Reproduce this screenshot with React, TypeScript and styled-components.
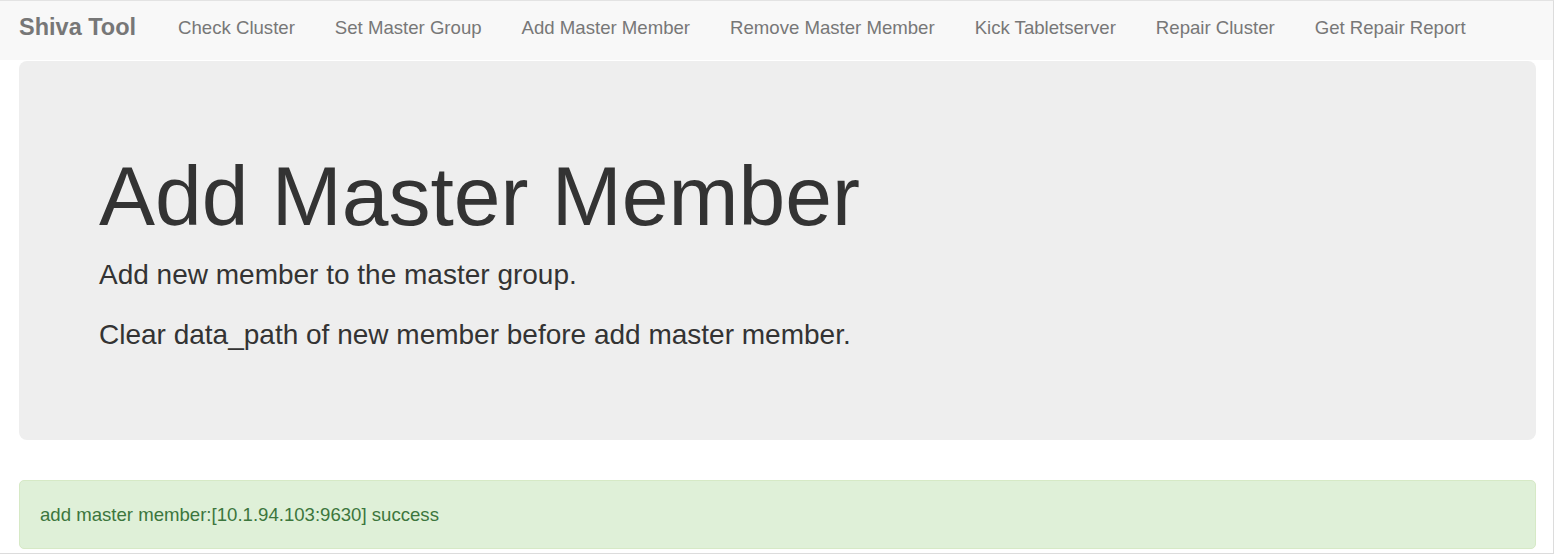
import React from 'react';
import styled, { createGlobalStyle } from 'styled-components';

const GlobalStyle = createGlobalStyle`
  html, body {
    margin: 0;
    padding: 0;
    background: #fff;
  }
  body {
    font-family: "Liberation Sans", Arial, Helvetica, sans-serif;
    color: #333;
  }
  * {
    box-sizing: border-box;
  }
`;

const Page = styled.div`
  width: 1554px;
  height: 554px;
  border-top: 1px solid #e3e3e3;
  border-right: 1px solid #dcdcdc;
  border-bottom: 1px solid #dcdcdc;
  overflow: hidden;
`;

const Navbar = styled.nav`
  height: 59px;
  background: #f8f8f8;
  display: flex;
  align-items: center;
  padding: 0 0 6px 0;
`;

const Brand = styled.a`
  font-size: 23.5px;
  font-weight: bold;
  color: #777;
  text-decoration: none;
  padding: 0 22px 0 19px;
  line-height: 27px;
`;

const NavList = styled.ul`
  display: flex;
  list-style: none;
  margin: 0;
  padding: 0;
`;

const NavItem = styled.li`
  a {
    display: block;
    padding: 0 20px;
    font-size: 18.6px;
    line-height: 27px;
    color: #777;
    text-decoration: none;
  }
`;

const Container = styled.div`
  padding: 1px 17px 0 19px;
`;

const Jumbotron = styled.div`
  background: #eee;
  border-radius: 8px;
  padding: 62px 80px 65px;
`;

const Title = styled.h1`
  margin: 27px 0 13px;
  font-size: 84px;
  font-weight: 500;
  line-height: 1.1;
  color: #333;
`;

const Lead = styled.p`
  margin: 0 0 20px;
  font-size: 28px;
  line-height: 40px;
  font-weight: 200;
`;

const Alert = styled.div<{ $variant: 'success' }>`
  margin-top: 40px;
  padding: 20px;
  border: 1px solid #d6e9c6;
  border-radius: 5px;
  background: #dff0d8;
  color: #3c763d;
  font-size: 18.6px;
  line-height: 27px;
`;

const links = [
  'Check Cluster',
  'Set Master Group',
  'Add Master Member',
  'Remove Master Member',
  'Kick Tabletserver',
  'Repair Cluster',
  'Get Repair Report',
];

export default function App() {
  return (
    <>
      <GlobalStyle />
      <Page>
        <Navbar>
          <Brand href="#">Shiva Tool</Brand>
          <NavList>
            {links.map((l) => (
              <NavItem key={l}>
                <a href="#">{l}</a>
              </NavItem>
            ))}
          </NavList>
        </Navbar>
        <Container>
          <Jumbotron>
            <Title>Add Master Member</Title>
            <Lead>Add new member to the master group.</Lead>
            <Lead>Clear data_path of new member before add master member.</Lead>
          </Jumbotron>
          <Alert $variant="success">add master member:[10.1.94.103:9630] success</Alert>
        </Container>
      </Page>
    </>
  );
}
